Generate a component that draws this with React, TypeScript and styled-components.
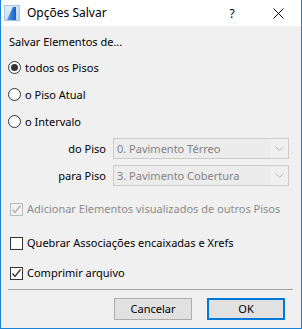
import React from "react";
import styled, { createGlobalStyle } from "styled-components";

const Global = createGlobalStyle`
  html, body { margin: 0; padding: 0; background: #f0f0f0; }
  body { font-family: "Noto Sans", "Open Sans", sans-serif; font-size: 11px; color: #000; white-space: nowrap; }
`;

const Window = styled.div`
  width: 302px;
  height: 329px;
  box-sizing: border-box;
  border: 1px solid #1883d7;
  border-top: none;
  background: #f0f0f0;
  display: flex;
  flex-direction: column;
`;

const TitleBar = styled.div`
  height: 26px;
  background: #fff;
  display: flex;
  align-items: center;
  padding-left: 3px;
`;

const TitleText = styled.div`
  margin-left: 7px;
  flex: 1;
  font-size: 12px;
  line-height: 16px;
`;

const TitleButton = styled.div<{ $w: number }>`
  width: ${(p) => p.$w}px;
  height: 26px;
  font-size: 12px;
  display: flex;
  align-items: center;
  justify-content: center;
`;

const Body = styled.div`
  flex: 1;
  display: flex;
  flex-direction: column;
  padding: 8px 0 0 6px;
`;

const Heading = styled.div`
  line-height: 16px;
  height: 16px;
  padding-left: 2px;
  margin-bottom: 4px;
`;

const OptionRow = styled.label<{ $h: number; $disabled?: boolean }>`
  height: ${(p) => p.$h}px;
  display: flex;
  align-items: center;
  gap: 4px;
  color: ${(p) => (p.$disabled ? "#8c8c8c" : "#000")};
  line-height: 16px;
`;

const Radio = styled.span<{ $on?: boolean }>`
  width: 13px;
  height: 13px;
  box-sizing: border-box;
  border: 1px solid #333;
  border-radius: 50%;
  background: #fff;
  display: flex;
  align-items: center;
  justify-content: center;
  margin-left: 1px;
  &::after {
    content: "";
    display: ${(p) => (p.$on ? "block" : "none")};
    width: 7px;
    height: 7px;
    border-radius: 50%;
    background: #333;
  }
`;

const Check = styled.span<{ $disabled?: boolean }>`
  width: 13px;
  height: 13px;
  box-sizing: border-box;
  border: 1px solid ${(p) => (p.$disabled ? "#bcbcbc" : "#333")};
  background: ${(p) => (p.$disabled ? "#f0f0f0" : "#fff")};
  display: flex;
  align-items: center;
  justify-content: center;
  margin-left: 3px;
`;

const ComboRow = styled.div`
  height: 27px;
  display: flex;
  align-items: center;
`;

const ComboLabel = styled.div`
  width: 106px;
  text-align: right;
  padding-right: 7px;
  box-sizing: border-box;
`;

const Combo = styled.div`
  width: 176px;
  height: 21px;
  box-sizing: border-box;
  border: 1px solid #cccccc;
  background: #f0f0f0;
  display: flex;
  align-items: stretch;
  color: #838383;
`;

const ComboText = styled.div`
  flex: 1;
  padding-left: 3px;
  line-height: 19px;
  background: #ececec;
`;

const ComboArrow = styled.div`
  width: 17px;
  display: flex;
  align-items: center;
  justify-content: center;
  background: #f0f0f0;
`;

const Spacer = styled.div<{ $h: number }>`
  height: ${(p) => p.$h}px;
  flex: none;
`;

const Footer = styled.div`
  margin-top: auto;
  border-top: 1px solid #a0a0a0;
  margin-left: 1px;
  margin-right: 8px;
  display: flex;
  justify-content: flex-end;
  gap: 15px;
  padding: 8px 8px 8px 0;
`;

const Button = styled.button<{ $primary?: boolean }>`
  width: 78px;
  height: 22px;
  box-sizing: border-box;
  font: inherit;
  color: #000;
  background: #e1e1e1;
  border: ${(p) => (p.$primary ? "2px solid #0078d7" : "1px solid #adadad")};
  padding: 0;
  line-height: 16px;
`;

const Arrow = () => (
  <svg width="9" height="6" viewBox="0 0 9 6">
    <path d="M0.5 0.5 L4.5 4.5 L8.5 0.5" fill="none" stroke="#b5b5b5" strokeWidth="1" />
  </svg>
);

const Tick = ({ color }: { color: string }) => (
  <svg width="11" height="11" viewBox="0 0 11 11">
    <path d="M1.5 5.5 L4 8.5 L9.5 1.5" fill="none" stroke={color} strokeWidth="1.3" />
  </svg>
);

export default function App() {
  return (
    <>
      <Global />
      <Window>
        <TitleBar>
          <svg width="16" height="16" viewBox="0 0 16 16">
            <defs>
              <linearGradient id="bg" x1="0" y1="0" x2="1" y2="1">
                <stop offset="0" stopColor="#e6f0fa" />
                <stop offset="1" stopColor="#b8d3ef" />
              </linearGradient>
              <linearGradient id="sail" x1="0" y1="0" x2="1" y2="0">
                <stop offset="0" stopColor="#4f9be6" />
                <stop offset="1" stopColor="#1a5fc0" />
              </linearGradient>
            </defs>
            <rect x="0.5" y="0.5" width="15" height="15" fill="url(#bg)" stroke="#a7c4e6" />
            <path d="M3 15 L9 2 L12 2 L12 15 Z" fill="url(#sail)" />
          </svg>
          <TitleText>Opções Salvar</TitleText>
          <TitleButton $w={46}>?</TitleButton>
          <TitleButton $w={46}>
            <svg width="11" height="11" viewBox="0 0 11 11">
              <path d="M0.5 0.5 L10.5 10.5 M10.5 0.5 L0.5 10.5" stroke="#000" strokeWidth="1" />
            </svg>
          </TitleButton>
        </TitleBar>
        <Body>
          <Heading>Salvar Elementos de...</Heading>
          <OptionRow $h={27}>
            <Radio $on />
            todos os Pisos
          </OptionRow>
          <OptionRow $h={27}>
            <Radio />
            o Piso Atual
          </OptionRow>
          <OptionRow $h={27}>
            <Radio />
            o Intervalo
          </OptionRow>
          <ComboRow>
            <ComboLabel>do Piso</ComboLabel>
            <Combo>
              <ComboText>0. Pavimento Térreo</ComboText>
              <ComboArrow>
                <Arrow />
              </ComboArrow>
            </Combo>
          </ComboRow>
          <ComboRow>
            <ComboLabel>para Piso</ComboLabel>
            <Combo>
              <ComboText>3. Pavimento Cobertura</ComboText>
              <ComboArrow>
                <Arrow />
              </ComboArrow>
            </Combo>
          </ComboRow>
          <Spacer $h={6} />
          <OptionRow $h={28} $disabled>
            <Check $disabled>
              <Tick color="#b0b0b0" />
            </Check>
            Adicionar Elementos visualizados de outros Pisos
          </OptionRow>
          <Spacer $h={6} />
          <OptionRow $h={28}>
            <Check />
            Quebrar Associações encaixadas e Xrefs
          </OptionRow>
          <OptionRow $h={32}>
            <Check>
              <Tick color="#333" />
            </Check>
            Comprimir arquivo
          </OptionRow>
          <Footer>
            <Button>Cancelar</Button>
            <Button $primary>OK</Button>
          </Footer>
        </Body>
      </Window>
    </>
  );
}
